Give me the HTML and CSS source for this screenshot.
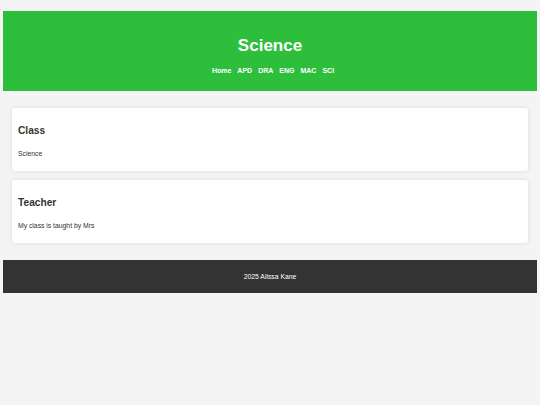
FILE: index.html
```html
<!DOCTYPE html>
<html lang="en">
<head>
<meta charset="utf-8">
<title>Science</title>
<link rel="stylesheet" href="styles.css">
</head>
<body>
<header class="site-header">
  <h1 class="site-title">Science</h1>
  <nav class="site-nav">
    <a href="#">Home</a>
    <a href="#">APD</a>
    <a href="#">DRA</a>
    <a href="#">ENG</a>
    <a href="#">MAC</a>
    <a href="#">SCI</a>
  </nav>
</header>
<main class="content">
  <section class="card">
    <h2 class="card-title">Class</h2>
    <p class="card-text">Science</p>
  </section>
  <section class="card">
    <h2 class="card-title">Teacher</h2>
    <p class="card-text">My class is taught by Mrs</p>
  </section>
</main>
<footer class="site-footer">
  <p>2025 Alissa Kane</p>
</footer>
</body>
</html>
```

FILE: styles.css
```css
html, body {
  background: #f4f4f4;
}
body {
  margin: 11px 3px 0;
  font-family: "Liberation Sans", Arial, sans-serif;
  font-size: 6.8px;
  color: #333;
}
.site-header {
  background: #2dbf3b;
  color: #fff;
  height: 80px;
  box-sizing: border-box;
  padding-top: 25px;
  text-align: center;
}
.site-title {
  margin: 0;
  font-size: 17px;
  line-height: 20px;
  font-weight: bold;
}
.site-nav {
  margin-top: 11px;
  padding-left: 6px;
  display: flex;
  justify-content: center;
  gap: 6px;
}
.site-nav a {
  color: #fff;
  text-decoration: none;
  font-weight: bold;
  font-size: 7px;
}
.content {
  padding: 17px 9px;
  display: flex;
  flex-direction: column;
  gap: 9px;
}
.card {
  background: #fff;
  border-radius: 3px;
  box-shadow: 0 0 4px rgba(0, 0, 0, 0.1);
  height: 63px;
  box-sizing: border-box;
  padding: 17px 6px 0;
}
.card-title {
  margin: 0;
  font-size: 10.2px;
  line-height: 12px;
  font-weight: bold;
}
.card-text {
  margin: 11.5px 0 0;
  line-height: 10px;
}
.site-footer {
  background: #333;
  color: #fff;
  height: 33px;
  display: flex;
  align-items: center;
  justify-content: center;
}
.site-footer p {
  margin: 0;
}
```
